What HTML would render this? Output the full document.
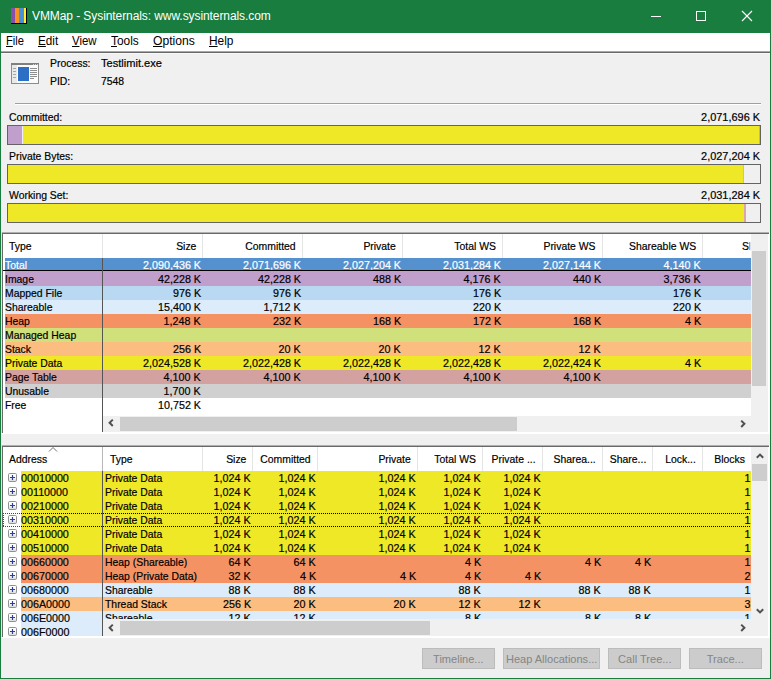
<!DOCTYPE html>
<html><head><meta charset="utf-8"><title>VMMap - Sysinternals: www.sysinternals.com</title>
<style>
html,body{margin:0;padding:0}
body{width:771px;height:679px;position:relative;overflow:hidden;background:#f0f0f0;
 font-family:"Liberation Sans",sans-serif;font-size:11px;color:#000;line-height:14px}
div,span{position:absolute;box-sizing:border-box;white-space:nowrap}
.t,.n,.b{-webkit-text-stroke:0.2px currentColor}
.t{font-size:11.5px;transform:scaleX(0.905);transform-origin:0 0}
.t.r{transform-origin:100% 0}
.n{font-size:11.5px;transform:scaleX(0.935);transform-origin:100% 0}
.n.l{transform-origin:0 0}
.b{font-size:11.5px;transform:scaleX(0.95);transform-origin:100% 0}
.r{text-align:right}
u{text-decoration:underline;text-decoration-thickness:1px;text-underline-offset:1px}
.btn{background:#cccccc;border:1px solid #bcbcbc;color:#858585;text-align:center;height:21px;top:648px;line-height:20px;font-size:11.5px}
.btn span{position:static;display:inline-block;transform:scaleX(0.96)}
</style></head><body>

<svg width="0" height="0" style="position:absolute"><defs><linearGradient id="pg" x1="0" y1="0" x2="0" y2="1"><stop offset="0.4" stop-color="#fff"/><stop offset="1" stop-color="#d8d8d8"/></linearGradient></defs></svg>
<div style="left:0;top:0;width:771px;height:679px;background:#187d3e"></div>
<div style="left:1px;top:33px;width:769px;height:645px;background:#f0f0f0"></div>
<div style="left:11px;top:8px;width:16px;height:16px;background:#000"></div>
<div style="left:11px;top:8px;width:4px;height:15px;background:#8a4fa8"></div>
<div style="left:15px;top:8px;width:4px;height:15px;background:#f7941d"></div>
<div style="left:19px;top:8px;width:5px;height:15px;background:#4a90d9"></div>
<div style="left:24px;top:8px;width:2px;height:15px;background:#fff22d"></div>
<div id="title" style="left:32px;top:8px;color:#fff;font-size:12px;letter-spacing:-0.08px;line-height:16px">VMMap - Sysinternals: www.sysinternals.com</div>
<svg style="position:absolute;left:640px;top:0" width="130" height="33" viewBox="0 0 130 33">
<path d="M11 16.5h10" stroke="#fff" stroke-width="1" fill="none"/>
<rect x="56.5" y="11.5" width="9" height="9" stroke="#fff" stroke-width="1" fill="none"/>
<path d="M102 11l10 10M112 11l-10 10" stroke="#fff" stroke-width="1.1" fill="none"/>
</svg>
<div style="left:1px;top:33px;width:769px;height:18px;background:#fff"></div>
<div class="m" style="left:6px;top:34px;font-size:12px;line-height:15px;transform:scaleX(0.93);transform-origin:0 0"><u>F</u>ile</div>
<div class="m" style="left:38px;top:34px;font-size:12px;line-height:15px;transform:scaleX(0.975);transform-origin:0 0"><u>E</u>dit</div>
<div class="m" style="left:72px;top:34px;font-size:12px;line-height:15px;transform:scaleX(0.955);transform-origin:0 0"><u>V</u>iew</div>
<div class="m" style="left:111px;top:34px;font-size:12px;line-height:15px;transform:scaleX(0.99);transform-origin:0 0"><u>T</u>ools</div>
<div class="m" style="left:153px;top:34px;font-size:12px;line-height:15px;transform:scaleX(1.01);transform-origin:0 0"><u>O</u>ptions</div>
<div class="m" style="left:209px;top:34px;font-size:12px;line-height:15px;transform:scaleX(0.99);transform-origin:0 0"><u>H</u>elp</div>
<div style="left:1px;top:51px;width:769px;height:1px;background:#a8a8a8"></div>
<div style="left:1px;top:52px;width:769px;height:1px;background:#696969"></div>
<div style="left:1px;top:53px;width:769px;height:1px;background:#f8f8f8"></div>
<svg style="position:absolute;left:11px;top:63px" width="28" height="21" viewBox="0 0 28 21">
<rect x="0.5" y="0.5" width="27" height="20" fill="#fbfbfb" stroke="#8c8c8c"/>
<rect x="0" y="0" width="28" height="2" fill="#808080"/>
<rect x="1" y="2" width="5" height="18" fill="#e9e9e9"/>
<rect x="22" y="1" width="1" height="1" fill="#d0d0d0"/><rect x="24" y="1" width="1" height="1" fill="#d0d0d0"/><rect x="26" y="1" width="1" height="1" fill="#d0d0d0"/>
<rect x="7" y="4" width="11" height="14" fill="#2c6fc4"/>
<g stroke="#a6a6a6" stroke-width="1"><path d="M2 5.5h3M2 8.5h3M2 11.5h3M2 14.5h3"/></g>
<g stroke="#8e8e8e" stroke-width="1"><path d="M19 5.5h7M19 7.5h7M19 9.5h7M19 11.5h7M19 13.5h7M19 15.5h4"/></g>
</svg>
<div class="t" style="left:50px;top:56px">Process:</div>
<div class="t" style="left:101px;top:56px;transform:scaleX(0.963)">Testlimit.exe</div>
<div class="t" style="left:50px;top:74px">PID:</div>
<div class="t" style="left:101px;top:74px">7548</div>
<div style="left:15px;top:103px;width:746px;height:1px;background:#a0a0a0"></div>
<div style="left:15px;top:104px;width:746px;height:1px;background:#fff"></div>
<div class="t" style="left:9px;top:110px">Committed:</div>
<div class="b r" style="right:11px;top:110px">2,071,696 K</div>
<div style="left:7px;top:125px;width:754px;height:20px;background:#f0f0f0;border:1px solid #646464"></div>
<div style="left:8px;top:126px;width:14px;height:18px;background:#c09fcc"></div>
<div style="left:22px;top:126px;width:1px;height:18px;background:#f0ecf6"></div>
<div style="left:23px;top:126px;width:736px;height:18px;background:#efe827"></div>
<div style="left:759px;top:126px;width:1px;height:18px;background:#d8a4a4"></div>
<div class="t" style="left:9px;top:149px">Private Bytes:</div>
<div class="b r" style="right:11px;top:149px">2,027,204 K</div>
<div style="left:7px;top:164px;width:754px;height:20px;background:#f0f0f0;border:1px solid #646464"></div>
<div style="left:8px;top:165px;width:735px;height:18px;background:#efe827"></div>
<div style="left:743px;top:165px;width:1px;height:18px;background:#e8b0a0"></div>
<div class="t" style="left:9px;top:188px">Working Set:</div>
<div class="b r" style="right:11px;top:188px">2,031,284 K</div>
<div style="left:7px;top:203px;width:754px;height:20px;background:#f0f0f0;border:1px solid #646464"></div>
<div style="left:8px;top:204px;width:736px;height:18px;background:#efe827"></div>
<div style="left:744px;top:204px;width:2px;height:18px;background:#dba6a6"></div>
<div style="left:1px;top:232px;width:769px;height:202px;background:#fff"></div>
<div style="left:1px;top:232px;width:768px;height:1px;background:#b0b0b0"></div>
<div style="left:1px;top:232px;width:1px;height:201px;background:#e4e4e4"></div>
<div style="left:2px;top:233px;width:767px;height:1px;background:#696969"></div>
<div style="left:2px;top:233px;width:1px;height:200px;background:#696969"></div>
<div class="t" style="left:9px;top:238.5px">Type</div>
<div class="t r" style="right:575px;top:238.5px">Size</div>
<div class="t r" style="right:475px;top:238.5px">Committed</div>
<div class="t r" style="right:375px;top:238.5px">Private</div>
<div class="t r" style="right:275px;top:238.5px">Total WS</div>
<div class="t r" style="right:175px;top:238.5px">Private WS</div>
<div class="t r" style="right:75px;top:238.5px">Shareable WS</div>
<div class="t" style="left:742px;top:238.5px;width:9px;overflow:hidden">Sh</div>
<div style="left:102px;top:234px;width:1px;height:24px;background:#e5e5e5"></div>
<div style="left:202px;top:234px;width:1px;height:24px;background:#e5e5e5"></div>
<div style="left:302px;top:234px;width:1px;height:24px;background:#e5e5e5"></div>
<div style="left:402px;top:234px;width:1px;height:24px;background:#e5e5e5"></div>
<div style="left:502px;top:234px;width:1px;height:24px;background:#e5e5e5"></div>
<div style="left:602px;top:234px;width:1px;height:24px;background:#e5e5e5"></div>
<div style="left:702px;top:234px;width:1px;height:24px;background:#e5e5e5"></div>
<div style="left:5px;top:258px;width:746px;height:14px;background:#5590cf"></div>
<div class="t" style="left:5px;top:257.5px;color:#fff">Total</div>
<div class="n r" style="right:570px;top:257.5px;color:#fff">2,090,436 K</div>
<div class="n r" style="right:470px;top:257.5px;color:#fff">2,071,696 K</div>
<div class="n r" style="right:370px;top:257.5px;color:#fff">2,027,204 K</div>
<div class="n r" style="right:270px;top:257.5px;color:#fff">2,031,284 K</div>
<div class="n r" style="right:170px;top:257.5px;color:#fff">2,027,144 K</div>
<div class="n r" style="right:70px;top:257.5px;color:#fff">4,140 K</div>
<div style="left:3px;top:270px;width:748px;height:1px;background:#000"></div>
<div style="left:5px;top:271px;width:746px;height:1px;background:#c09fcc"></div>
<div style="left:5px;top:272px;width:746px;height:14px;background:#c09fcc"></div>
<div class="t" style="left:5px;top:271.5px;color:#000">Image</div>
<div class="n r" style="right:570px;top:271.5px;color:#000">42,228 K</div>
<div class="n r" style="right:470px;top:271.5px;color:#000">42,228 K</div>
<div class="n r" style="right:370px;top:271.5px;color:#000">488 K</div>
<div class="n r" style="right:270px;top:271.5px;color:#000">4,176 K</div>
<div class="n r" style="right:170px;top:271.5px;color:#000">440 K</div>
<div class="n r" style="right:70px;top:271.5px;color:#000">3,736 K</div>
<div style="left:5px;top:286px;width:746px;height:14px;background:#b9d8f1"></div>
<div class="t" style="left:5px;top:285.5px;color:#000">Mapped File</div>
<div class="n r" style="right:570px;top:285.5px;color:#000">976 K</div>
<div class="n r" style="right:470px;top:285.5px;color:#000">976 K</div>
<div class="n r" style="right:270px;top:285.5px;color:#000">176 K</div>
<div class="n r" style="right:70px;top:285.5px;color:#000">176 K</div>
<div style="left:5px;top:300px;width:746px;height:14px;background:#dcecfa"></div>
<div class="t" style="left:5px;top:299.5px;color:#000">Shareable</div>
<div class="n r" style="right:570px;top:299.5px;color:#000">15,400 K</div>
<div class="n r" style="right:470px;top:299.5px;color:#000">1,712 K</div>
<div class="n r" style="right:270px;top:299.5px;color:#000">220 K</div>
<div class="n r" style="right:70px;top:299.5px;color:#000">220 K</div>
<div style="left:5px;top:314px;width:746px;height:14px;background:#f59264"></div>
<div class="t" style="left:5px;top:313.5px;color:#000">Heap</div>
<div class="n r" style="right:570px;top:313.5px;color:#000">1,248 K</div>
<div class="n r" style="right:470px;top:313.5px;color:#000">232 K</div>
<div class="n r" style="right:370px;top:313.5px;color:#000">168 K</div>
<div class="n r" style="right:270px;top:313.5px;color:#000">172 K</div>
<div class="n r" style="right:170px;top:313.5px;color:#000">168 K</div>
<div class="n r" style="right:70px;top:313.5px;color:#000">4 K</div>
<div style="left:5px;top:328px;width:746px;height:14px;background:#d0e07a"></div>
<div class="t" style="left:5px;top:327.5px;color:#000">Managed Heap</div>
<div style="left:5px;top:342px;width:746px;height:14px;background:#fbbd80"></div>
<div class="t" style="left:5px;top:341.5px;color:#000">Stack</div>
<div class="n r" style="right:570px;top:341.5px;color:#000">256 K</div>
<div class="n r" style="right:470px;top:341.5px;color:#000">20 K</div>
<div class="n r" style="right:370px;top:341.5px;color:#000">20 K</div>
<div class="n r" style="right:270px;top:341.5px;color:#000">12 K</div>
<div class="n r" style="right:170px;top:341.5px;color:#000">12 K</div>
<div style="left:5px;top:356px;width:746px;height:14px;background:#efe827"></div>
<div class="t" style="left:5px;top:355.5px;color:#000">Private Data</div>
<div class="n r" style="right:570px;top:355.5px;color:#000">2,024,528 K</div>
<div class="n r" style="right:470px;top:355.5px;color:#000">2,022,428 K</div>
<div class="n r" style="right:370px;top:355.5px;color:#000">2,022,428 K</div>
<div class="n r" style="right:270px;top:355.5px;color:#000">2,022,428 K</div>
<div class="n r" style="right:170px;top:355.5px;color:#000">2,022,424 K</div>
<div class="n r" style="right:70px;top:355.5px;color:#000">4 K</div>
<div style="left:5px;top:370px;width:746px;height:14px;background:#d4a1a1"></div>
<div class="t" style="left:5px;top:369.5px;color:#000">Page Table</div>
<div class="n r" style="right:570px;top:369.5px;color:#000">4,100 K</div>
<div class="n r" style="right:470px;top:369.5px;color:#000">4,100 K</div>
<div class="n r" style="right:370px;top:369.5px;color:#000">4,100 K</div>
<div class="n r" style="right:270px;top:369.5px;color:#000">4,100 K</div>
<div class="n r" style="right:170px;top:369.5px;color:#000">4,100 K</div>
<div style="left:5px;top:384px;width:746px;height:14px;background:#d0d0d0"></div>
<div class="t" style="left:5px;top:383.5px;color:#000">Unusable</div>
<div class="n r" style="right:570px;top:383.5px;color:#000">1,700 K</div>
<div style="left:5px;top:398px;width:746px;height:14px;background:#ffffff"></div>
<div class="t" style="left:5px;top:397.5px;color:#000">Free</div>
<div class="n r" style="right:570px;top:397.5px;color:#000">10,752 K</div>
<div style="left:102px;top:258px;width:1px;height:174px;background:#555"></div>
<div style="left:751px;top:234px;width:17px;height:198px;background:#f0f0f0"></div>
<div style="left:752px;top:251px;width:14px;height:135px;background:#cdcdcd"></div>
<div style="left:103px;top:416px;width:665px;height:16px;background:#f0f0f0"></div>
<div style="left:120px;top:417px;width:397px;height:14px;background:#cdcdcd"></div>
<svg style="position:absolute;left:106.7px;top:418.4px" width="8" height="10" viewBox="0 0 8 10"><path d="M5.8 1.6L2.6 4.8l3.2 3.2" stroke="#505050" stroke-width="2" fill="none"/></svg>
<svg style="position:absolute;left:739px;top:418.7px" width="8" height="10" viewBox="0 0 8 10"><path d="M2.2 1.6l3.2 3.2-3.2 3.2" stroke="#505050" stroke-width="2" fill="none"/></svg>
<div style="left:1px;top:445px;width:769px;height:193px;background:#fff"></div>
<div style="left:1px;top:445px;width:768px;height:1px;background:#b0b0b0"></div>
<div style="left:1px;top:445px;width:1px;height:192px;background:#e4e4e4"></div>
<div style="left:2px;top:446px;width:767px;height:1px;background:#696969"></div>
<div style="left:2px;top:446px;width:1px;height:191px;background:#696969"></div>
<div class="t" style="left:9px;top:451.5px">Address</div>
<div class="t" style="left:109.6px;top:451.5px">Type</div>
<div class="t r" style="right:525px;top:451.5px">Size</div>
<div class="t r" style="right:460px;top:451.5px">Committed</div>
<div class="t r" style="right:360px;top:451.5px">Private</div>
<div class="t r" style="right:295px;top:451.5px">Total WS</div>
<div class="t r" style="right:235px;top:451.5px">Private ...</div>
<div class="t r" style="right:175px;top:451.5px">Sharea...</div>
<div class="t r" style="right:125px;top:451.5px">Share...</div>
<div class="t r" style="right:75px;top:451.5px">Lock...</div>
<div class="t r" style="right:26px;top:451.5px">Blocks</div>
<div style="left:202px;top:447px;width:1px;height:24px;background:#e5e5e5"></div>
<div style="left:252px;top:447px;width:1px;height:24px;background:#e5e5e5"></div>
<div style="left:317px;top:447px;width:1px;height:24px;background:#e5e5e5"></div>
<div style="left:417px;top:447px;width:1px;height:24px;background:#e5e5e5"></div>
<div style="left:482px;top:447px;width:1px;height:24px;background:#e5e5e5"></div>
<div style="left:542px;top:447px;width:1px;height:24px;background:#e5e5e5"></div>
<div style="left:602px;top:447px;width:1px;height:24px;background:#e5e5e5"></div>
<div style="left:652px;top:447px;width:1px;height:24px;background:#e5e5e5"></div>
<div style="left:702px;top:447px;width:1px;height:24px;background:#e5e5e5"></div>
<div style="left:102px;top:447px;width:1px;height:24px;background:#b8b8b8"></div>
<svg style="position:absolute;left:48px;top:447px" width="10" height="5" viewBox="0 0 10 5"><path d="M1 4.5l4-4 4 4" stroke="#707070" stroke-width="1" fill="none"/></svg>
<div style="left:103px;top:471px;width:648px;height:148px;overflow:hidden">
<div style="left:0;top:0px;width:648px;height:14px;background:#efe827"></div>
<div class="t" style="left:2px;top:-0.5px">Private Data</div>
<div class="n r" style="right:500px;top:-0.5px">1,024 K</div>
<div class="n r" style="right:435px;top:-0.5px">1,024 K</div>
<div class="n r" style="right:335px;top:-0.5px">1,024 K</div>
<div class="n r" style="right:270px;top:-0.5px">1,024 K</div>
<div class="n r" style="right:210px;top:-0.5px">1,024 K</div>
<div class="n r" style="right:1px;top:-0.5px">1</div>
<div style="left:0;top:14px;width:648px;height:14px;background:#efe827"></div>
<div class="t" style="left:2px;top:13.5px">Private Data</div>
<div class="n r" style="right:500px;top:13.5px">1,024 K</div>
<div class="n r" style="right:435px;top:13.5px">1,024 K</div>
<div class="n r" style="right:335px;top:13.5px">1,024 K</div>
<div class="n r" style="right:270px;top:13.5px">1,024 K</div>
<div class="n r" style="right:210px;top:13.5px">1,024 K</div>
<div class="n r" style="right:1px;top:13.5px">1</div>
<div style="left:0;top:28px;width:648px;height:14px;background:#efe827"></div>
<div class="t" style="left:2px;top:27.5px">Private Data</div>
<div class="n r" style="right:500px;top:27.5px">1,024 K</div>
<div class="n r" style="right:435px;top:27.5px">1,024 K</div>
<div class="n r" style="right:335px;top:27.5px">1,024 K</div>
<div class="n r" style="right:270px;top:27.5px">1,024 K</div>
<div class="n r" style="right:210px;top:27.5px">1,024 K</div>
<div class="n r" style="right:1px;top:27.5px">1</div>
<div style="left:0;top:42px;width:648px;height:14px;background:#efe827"></div>
<div class="t" style="left:2px;top:41.5px">Private Data</div>
<div class="n r" style="right:500px;top:41.5px">1,024 K</div>
<div class="n r" style="right:435px;top:41.5px">1,024 K</div>
<div class="n r" style="right:335px;top:41.5px">1,024 K</div>
<div class="n r" style="right:270px;top:41.5px">1,024 K</div>
<div class="n r" style="right:210px;top:41.5px">1,024 K</div>
<div class="n r" style="right:1px;top:41.5px">1</div>
<div style="left:0;top:56px;width:648px;height:14px;background:#efe827"></div>
<div class="t" style="left:2px;top:55.5px">Private Data</div>
<div class="n r" style="right:500px;top:55.5px">1,024 K</div>
<div class="n r" style="right:435px;top:55.5px">1,024 K</div>
<div class="n r" style="right:335px;top:55.5px">1,024 K</div>
<div class="n r" style="right:270px;top:55.5px">1,024 K</div>
<div class="n r" style="right:210px;top:55.5px">1,024 K</div>
<div class="n r" style="right:1px;top:55.5px">1</div>
<div style="left:0;top:70px;width:648px;height:14px;background:#efe827"></div>
<div class="t" style="left:2px;top:69.5px">Private Data</div>
<div class="n r" style="right:500px;top:69.5px">1,024 K</div>
<div class="n r" style="right:435px;top:69.5px">1,024 K</div>
<div class="n r" style="right:335px;top:69.5px">1,024 K</div>
<div class="n r" style="right:270px;top:69.5px">1,024 K</div>
<div class="n r" style="right:210px;top:69.5px">1,024 K</div>
<div class="n r" style="right:1px;top:69.5px">1</div>
<div style="left:0;top:84px;width:648px;height:14px;background:#f59264"></div>
<div class="t" style="left:2px;top:83.5px">Heap (Shareable)</div>
<div class="n r" style="right:500px;top:83.5px">64 K</div>
<div class="n r" style="right:435px;top:83.5px">64 K</div>
<div class="n r" style="right:270px;top:83.5px">4 K</div>
<div class="n r" style="right:150px;top:83.5px">4 K</div>
<div class="n r" style="right:100px;top:83.5px">4 K</div>
<div class="n r" style="right:1px;top:83.5px">1</div>
<div style="left:0;top:98px;width:648px;height:14px;background:#f59264"></div>
<div class="t" style="left:2px;top:97.5px">Heap (Private Data)</div>
<div class="n r" style="right:500px;top:97.5px">32 K</div>
<div class="n r" style="right:435px;top:97.5px">4 K</div>
<div class="n r" style="right:335px;top:97.5px">4 K</div>
<div class="n r" style="right:270px;top:97.5px">4 K</div>
<div class="n r" style="right:210px;top:97.5px">4 K</div>
<div class="n r" style="right:1px;top:97.5px">2</div>
<div style="left:0;top:112px;width:648px;height:14px;background:#dcecfa"></div>
<div class="t" style="left:2px;top:111.5px">Shareable</div>
<div class="n r" style="right:500px;top:111.5px">88 K</div>
<div class="n r" style="right:435px;top:111.5px">88 K</div>
<div class="n r" style="right:270px;top:111.5px">88 K</div>
<div class="n r" style="right:150px;top:111.5px">88 K</div>
<div class="n r" style="right:100px;top:111.5px">88 K</div>
<div class="n r" style="right:1px;top:111.5px">1</div>
<div style="left:0;top:126px;width:648px;height:14px;background:#fbbd80"></div>
<div class="t" style="left:2px;top:125.5px">Thread Stack</div>
<div class="n r" style="right:500px;top:125.5px">256 K</div>
<div class="n r" style="right:435px;top:125.5px">20 K</div>
<div class="n r" style="right:335px;top:125.5px">20 K</div>
<div class="n r" style="right:270px;top:125.5px">12 K</div>
<div class="n r" style="right:210px;top:125.5px">12 K</div>
<div class="n r" style="right:1px;top:125.5px">3</div>
<div style="left:0;top:140px;width:648px;height:14px;background:#dcecfa"></div>
<div class="t" style="left:2px;top:139.5px">Shareable</div>
<div class="n r" style="right:500px;top:139.5px">12 K</div>
<div class="n r" style="right:435px;top:139.5px">12 K</div>
<div class="n r" style="right:270px;top:139.5px">8 K</div>
<div class="n r" style="right:150px;top:139.5px">8 K</div>
<div class="n r" style="right:100px;top:139.5px">8 K</div>
<div class="n r" style="right:1px;top:139.5px">1</div>
</div>
<div style="left:21px;top:471px;width:81px;height:14px;background:#efe827;overflow:hidden"><span class="n l" style="left:-0.3px;top:-0.5px">00010000</span></div>
<svg style="position:absolute;left:8px;top:473px" width="9" height="9" viewBox="0 0 9 9"><rect x="0.5" y="0.5" width="8" height="8" rx="1.2" fill="url(#pg)" stroke="#919191"/><path d="M2 4.5h5M4.5 2v5" stroke="#2b3f9e" stroke-width="1.2"/></svg>
<div style="left:21px;top:485px;width:81px;height:14px;background:#efe827;overflow:hidden"><span class="n l" style="left:-0.3px;top:-0.5px">00110000</span></div>
<svg style="position:absolute;left:8px;top:487px" width="9" height="9" viewBox="0 0 9 9"><rect x="0.5" y="0.5" width="8" height="8" rx="1.2" fill="url(#pg)" stroke="#919191"/><path d="M2 4.5h5M4.5 2v5" stroke="#2b3f9e" stroke-width="1.2"/></svg>
<div style="left:21px;top:499px;width:81px;height:14px;background:#efe827;overflow:hidden"><span class="n l" style="left:-0.3px;top:-0.5px">00210000</span></div>
<svg style="position:absolute;left:8px;top:501px" width="9" height="9" viewBox="0 0 9 9"><rect x="0.5" y="0.5" width="8" height="8" rx="1.2" fill="url(#pg)" stroke="#919191"/><path d="M2 4.5h5M4.5 2v5" stroke="#2b3f9e" stroke-width="1.2"/></svg>
<div style="left:21px;top:513px;width:81px;height:14px;background:#efe827;overflow:hidden"><span class="n l" style="left:-0.3px;top:-0.5px">00310000</span></div>
<svg style="position:absolute;left:8px;top:515px" width="9" height="9" viewBox="0 0 9 9"><rect x="0.5" y="0.5" width="8" height="8" rx="1.2" fill="url(#pg)" stroke="#919191"/><path d="M2 4.5h5M4.5 2v5" stroke="#2b3f9e" stroke-width="1.2"/></svg>
<div style="left:21px;top:527px;width:81px;height:14px;background:#efe827;overflow:hidden"><span class="n l" style="left:-0.3px;top:-0.5px">00410000</span></div>
<svg style="position:absolute;left:8px;top:529px" width="9" height="9" viewBox="0 0 9 9"><rect x="0.5" y="0.5" width="8" height="8" rx="1.2" fill="url(#pg)" stroke="#919191"/><path d="M2 4.5h5M4.5 2v5" stroke="#2b3f9e" stroke-width="1.2"/></svg>
<div style="left:21px;top:541px;width:81px;height:14px;background:#efe827;overflow:hidden"><span class="n l" style="left:-0.3px;top:-0.5px">00510000</span></div>
<svg style="position:absolute;left:8px;top:543px" width="9" height="9" viewBox="0 0 9 9"><rect x="0.5" y="0.5" width="8" height="8" rx="1.2" fill="url(#pg)" stroke="#919191"/><path d="M2 4.5h5M4.5 2v5" stroke="#2b3f9e" stroke-width="1.2"/></svg>
<div style="left:21px;top:555px;width:81px;height:14px;background:#f59264;overflow:hidden"><span class="n l" style="left:-0.3px;top:-0.5px">00660000</span></div>
<svg style="position:absolute;left:8px;top:557px" width="9" height="9" viewBox="0 0 9 9"><rect x="0.5" y="0.5" width="8" height="8" rx="1.2" fill="url(#pg)" stroke="#919191"/><path d="M2 4.5h5M4.5 2v5" stroke="#2b3f9e" stroke-width="1.2"/></svg>
<div style="left:21px;top:569px;width:81px;height:14px;background:#f59264;overflow:hidden"><span class="n l" style="left:-0.3px;top:-0.5px">00670000</span></div>
<svg style="position:absolute;left:8px;top:571px" width="9" height="9" viewBox="0 0 9 9"><rect x="0.5" y="0.5" width="8" height="8" rx="1.2" fill="url(#pg)" stroke="#919191"/><path d="M2 4.5h5M4.5 2v5" stroke="#2b3f9e" stroke-width="1.2"/></svg>
<div style="left:21px;top:583px;width:81px;height:14px;background:#dcecfa;overflow:hidden"><span class="n l" style="left:-0.3px;top:-0.5px">00680000</span></div>
<svg style="position:absolute;left:8px;top:585px" width="9" height="9" viewBox="0 0 9 9"><rect x="0.5" y="0.5" width="8" height="8" rx="1.2" fill="url(#pg)" stroke="#919191"/><path d="M2 4.5h5M4.5 2v5" stroke="#2b3f9e" stroke-width="1.2"/></svg>
<div style="left:21px;top:597px;width:81px;height:14px;background:#fbbd80;overflow:hidden"><span class="n l" style="left:-0.3px;top:-0.5px">006A0000</span></div>
<svg style="position:absolute;left:8px;top:599px" width="9" height="9" viewBox="0 0 9 9"><rect x="0.5" y="0.5" width="8" height="8" rx="1.2" fill="url(#pg)" stroke="#919191"/><path d="M2 4.5h5M4.5 2v5" stroke="#2b3f9e" stroke-width="1.2"/></svg>
<div style="left:21px;top:611px;width:81px;height:14px;background:#dcecfa;overflow:hidden"><span class="n l" style="left:-0.3px;top:-0.5px">006E0000</span></div>
<svg style="position:absolute;left:8px;top:613px" width="9" height="9" viewBox="0 0 9 9"><rect x="0.5" y="0.5" width="8" height="8" rx="1.2" fill="url(#pg)" stroke="#919191"/><path d="M2 4.5h5M4.5 2v5" stroke="#2b3f9e" stroke-width="1.2"/></svg>
<div style="left:21px;top:625px;width:81px;height:11px;background:#dcecfa;overflow:hidden"><span class="n l" style="left:-0.3px;top:-0.5px">006F0000</span></div>
<svg style="position:absolute;left:8px;top:627px" width="9" height="9" viewBox="0 0 9 9"><rect x="0.5" y="0.5" width="8" height="8" rx="1.2" fill="url(#pg)" stroke="#919191"/><path d="M2 4.5h5M4.5 2v5" stroke="#2b3f9e" stroke-width="1.2"/></svg>
<div style="left:3px;top:513px;width:18px;height:1px;background-image:repeating-linear-gradient(90deg,#2a3ad0 0 1px,transparent 1px 2px)"></div>
<div style="left:21px;top:513px;width:730px;height:1px;background-image:repeating-linear-gradient(90deg,#000 0 1px,transparent 1px 2px)"></div>
<div style="left:3px;top:526px;width:18px;height:1px;background-image:repeating-linear-gradient(90deg,#2a3ad0 0 1px,transparent 1px 2px)"></div>
<div style="left:21px;top:526px;width:730px;height:1px;background-image:repeating-linear-gradient(90deg,#000 0 1px,transparent 1px 2px)"></div>
<div style="left:3px;top:513px;width:1px;height:14px;background-image:repeating-linear-gradient(180deg,#2a3ad0 0 1px,transparent 1px 2px)"></div>
<div style="left:102px;top:471px;width:1px;height:165px;background:#555"></div>
<div style="left:751px;top:447px;width:17px;height:172px;background:#f0f0f0"></div>
<div style="left:752px;top:464px;width:15px;height:17px;background:#cdcdcd"></div>
<svg style="position:absolute;left:754.5px;top:452px" width="10" height="8" viewBox="0 0 10 8"><path d="M1.8 5.8l3.2-3.2 3.2 3.2" stroke="#505050" stroke-width="2" fill="none"/></svg>
<svg style="position:absolute;left:754.5px;top:607px" width="10" height="8" viewBox="0 0 10 8"><path d="M1.8 2.2l3.2 3.2 3.2-3.2" stroke="#505050" stroke-width="2" fill="none"/></svg>
<div style="left:103px;top:619px;width:665px;height:17px;background:#f0f0f0"></div>
<div style="left:120px;top:621px;width:310px;height:14px;background:#cdcdcd"></div>
<svg style="position:absolute;left:106.7px;top:622.5px" width="8" height="10" viewBox="0 0 8 10"><path d="M5.8 1.6L2.6 4.8l3.2 3.2" stroke="#505050" stroke-width="2" fill="none"/></svg>
<svg style="position:absolute;left:739px;top:622.5px" width="8" height="10" viewBox="0 0 8 10"><path d="M2.2 1.6l3.2 3.2-3.2 3.2" stroke="#505050" stroke-width="2" fill="none"/></svg>
<div class="btn" style="left:422px;width:73px"><span>Timeline...</span></div>
<div class="btn" style="left:503px;width:97px"><span>Heap Allocations...</span></div>
<div class="btn" style="left:608px;width:73px"><span>Call Tree...</span></div>
<div class="btn" style="left:689px;width:73px"><span>Trace...</span></div>
</body></html>
